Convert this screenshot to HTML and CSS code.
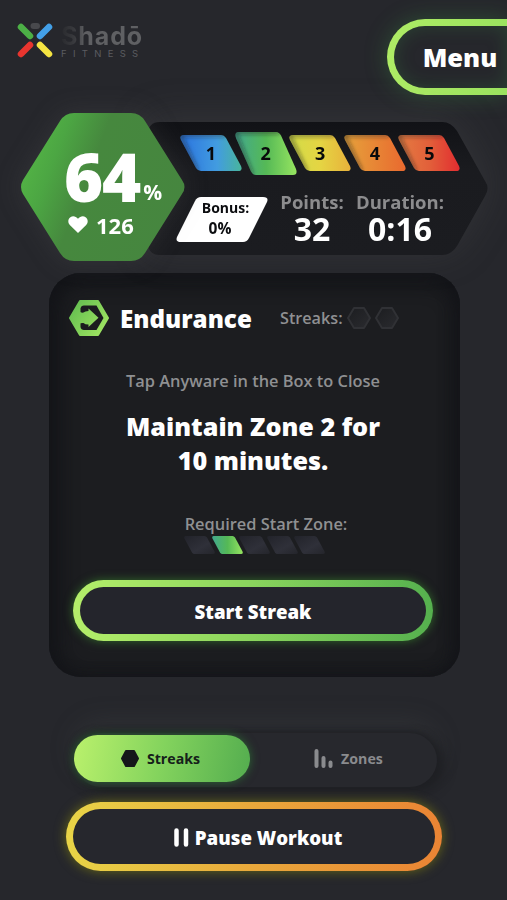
FILE: index.html
```
<!DOCTYPE html>
<html lang="en">
<head>
    <meta charset="UTF-8">
    <meta name="viewport" content="width=device-width, initial-scale=1.0">
    <title>Shadō Fitness</title>
    <link rel="stylesheet" href="styles.css">
</head>
<body>
    <!-- Shared shapes and gradients -->
    <svg class="defs" width="0" height="0">
        <defs>
            <path id="chip" d="M4 0H41Q44 0 46 3L61 31Q63 36 58 36H21Q18 36 16 33L1 5Q-1 0 4 0Z"/>
            <path id="hex" d="M7 1H17L23 11L17 21H7L1 11Z"/>
            <clipPath id="chipClip"><use href="#chip"/></clipPath>
            <filter id="soft" x="-20%" y="-20%" width="140%" height="140%"><feGaussianBlur stdDeviation="2"/></filter>
            <linearGradient id="blue"><stop offset=".1" stop-color="#2f7be0"/><stop offset=".6" stop-color="#429ce0"/><stop offset="1" stop-color="#49b59c"/></linearGradient>
            <linearGradient id="green"><stop offset="0" stop-color="#42a88e"/><stop offset=".5" stop-color="#55b956"/><stop offset="1" stop-color="#96e460"/></linearGradient>
            <linearGradient id="yellow"><stop offset="0" stop-color="#d2dc48"/><stop offset=".5" stop-color="#e5d543"/><stop offset="1" stop-color="#e8b13b"/></linearGradient>
            <linearGradient id="orange"><stop offset="0" stop-color="#e6a23b"/><stop offset="1" stop-color="#e9692f"/></linearGradient>
            <linearGradient id="red"><stop offset="0" stop-color="#e57c42"/><stop offset=".5" stop-color="#e2603a"/><stop offset="1" stop-color="#e22d30"/></linearGradient>
            <linearGradient id="off" x2="1" y2="1"><stop offset="0" stop-color="#22232a"/><stop offset=".6" stop-color="#2f3039"/><stop offset="1" stop-color="#24252b"/></linearGradient>
            <linearGradient id="hexOff" x2="1" y2="1"><stop offset="0" stop-color="#1c1d20"/><stop offset="1" stop-color="#2a2b2f"/></linearGradient>
            <linearGradient id="lime" gradientUnits="userSpaceOnUse" x1="0" y1="0" x2="40" y2="30"><stop offset="0" stop-color="#5cb94e"/><stop offset="1" stop-color="#a3e763"/></linearGradient>
            <linearGradient id="heart" x1="0" y1=".25" x2="1" y2=".6"><stop offset="0" stop-color="#55b746"/><stop offset=".2" stop-color="#4ca643"/><stop offset=".42" stop-color="#46883e"/><stop offset="1" stop-color="#46863f"/></linearGradient>
            <linearGradient id="panel" x2="0" y2="1"><stop offset="0" stop-color="#111216"/><stop offset=".35" stop-color="#1a1b1f"/><stop offset="1" stop-color="#1b1c20"/></linearGradient>
        </defs>
    </svg>

    <header class="header">
        <div class="logo">
            <svg width="36" height="38" viewBox="0 0 36 38" stroke-width="6.5" stroke-linecap="round">
                <rect x="13.500" y="2" width="9.500" height="6" rx="3" fill="#48494d"/>
                <path d="M4 6L13 15" stroke="#4caf46"/>
                <path d="M32 6L23 15" stroke="#43a0e8"/>
                <path d="M13 24L4 33" stroke="#e8352f"/>
                <path d="M23 24L32 33" stroke="#f5e442"/>
            </svg>
            <div class="logo-text">
                <div class="logo-name">Shadō</div>
                <div class="logo-sub">FITNESS</div>
            </div>
        </div>
        <button class="ring menu" type="button">Menu</button>
    </header>

    <section class="stats">
        <div class="heart-rate">
            <svg class="shape" width="165" height="148" viewBox="0 0 165 148">
                <path fill="url(#heart)" d="M3 67L40 8Q45 0 54 0H111Q120 0 125 8L162 67Q167 74 162 81L125 140Q120 148 111 148H54Q45 148 40 140L3 81Q-1 74 3 67Z"/>
            </svg>
            <div class="percent">64<span>%</span></div>
            <div class="bpm">
                <svg width="20" height="18" viewBox="0 0 20 18"><path fill="#fff" d="M10 17L1.8 9C-.5 6.500 0 2.800 2.400 1.200C4.900-.5 8 .3 10 2.800C12 .3 15.100-.5 17.600 1.200C20 2.800 20.500 6.500 18.200 9Z"/></svg>
                126
            </div>
        </div>
        <div class="panel">
            <svg class="shape" width="340" height="133" viewBox="0 0 340 133">
                <path fill="url(#panel)" d="M12 0H294Q303 0 309 9L337 59Q342 66 337 74L309 124Q303 133 294 133H12Q0 133 0 120V13Q0 0 12 0Z"/>
            </svg>
            <div class="zones">
                <div class="zone"><svg class="shape" viewBox="0 0 62 36"><use href="#chip" fill="url(#blue)"/><g clip-path="url(#chipClip)"><path class="shade" d="M17 36L0 0H45"/></g></svg><span>1</span></div>
                <div class="zone active"><svg class="shape" viewBox="0 0 62 36" preserveAspectRatio="none"><use href="#chip" fill="url(#green)"/><g clip-path="url(#chipClip)"><path class="shade" d="M17 36L0 0H45"/></g></svg><span>2</span></div>
                <div class="zone"><svg class="shape" viewBox="0 0 62 36"><use href="#chip" fill="url(#yellow)"/><g clip-path="url(#chipClip)"><path class="shade" d="M17 36L0 0H45"/></g></svg><span>3</span></div>
                <div class="zone"><svg class="shape" viewBox="0 0 62 36"><use href="#chip" fill="url(#orange)"/><g clip-path="url(#chipClip)"><path class="shade" d="M17 36L0 0H45"/></g></svg><span>4</span></div>
                <div class="zone"><svg class="shape" viewBox="0 0 62 36"><use href="#chip" fill="url(#red)"/><g clip-path="url(#chipClip)"><path class="shade" d="M17 36L0 0H45"/></g></svg><span>5</span></div>
            </div>
            <div class="totals">
                <div class="bonus">
                    <svg class="shape" width="92" height="45" viewBox="0 0 92 45"><path fill="#fff" d="M25 0H87Q93 0 91 5L73 41Q71 45 67 45H5Q-1 45 1 40L19 4Q21 0 25 0Z"/></svg>
                    <div class="bonus-label">Bonus:</div>
                    <div class="bonus-value">0%</div>
                </div>
                <div class="total points">
                    <div class="total-label">Points:</div>
                    <div class="total-value">32</div>
                </div>
                <div class="total duration">
                    <div class="total-label">Duration:</div>
                    <div class="total-value">0:16</div>
                </div>
            </div>
        </div>
    </section>

    <main class="card">
        <div class="card-header">
            <svg width="40" height="36" viewBox="0 0 40 36">
                <path fill="url(#lime)" stroke="url(#lime)" stroke-width="2" stroke-linejoin="round" d="M11 1H29L39 18L29 35H11L1 18Z"/>
                <path fill="#1b1c1f" d="M15 5.500H27.500L34.500 18L27.500 30H15Q12 30 11.500 27V8.500Q12 5.500 15 5.500Z"/>
                <path fill="url(#lime)" d="M10 11.500Q12 13 14.500 12.500Q16 11 19.500 11V8.500L29.500 17.800L19.500 27V24.500Q16 24.500 14.500 23Q12 22.500 10 24Z"/>
            </svg>
            <h1>Endurance</h1>
            <span class="streak-label">Streaks:</span>
            <svg class="streak-dot" width="24" height="22"><use href="#hex"/></svg>
            <svg class="streak-dot" width="24" height="22"><use href="#hex"/></svg>
        </div>
        <p class="hint">Tap Anyware in the Box to Close</p>
        <h2>Maintain Zone 2 for<br>10 minutes.</h2>
        <p class="required">Required Start Zone:</p>
        <div class="mini-zones">
            <svg width="31" height="18" viewBox="0 0 62 36"><use href="#chip" fill="url(#off)"/></svg>
            <svg width="31" height="18" viewBox="0 0 62 36"><use href="#chip" fill="url(#green)"/></svg>
            <svg width="31" height="18" viewBox="0 0 62 36"><use href="#chip" fill="url(#off)"/></svg>
            <svg width="31" height="18" viewBox="0 0 62 36"><use href="#chip" fill="url(#off)"/></svg>
            <svg width="31" height="18" viewBox="0 0 62 36"><use href="#chip" fill="url(#off)"/></svg>
        </div>
        <button class="ring start" type="button">Start Streak</button>
    </main>

    <nav class="tabs">
        <button class="tab tab-active" type="button">
            <svg width="18" height="17" viewBox="0 0 18 17"><path fill="#15171a" stroke="#15171a" stroke-width="2" stroke-linejoin="round" d="M5 1H13L17 8.500L13 16H5L1 8.500Z"/></svg>
            Streaks
        </button>
        <button class="tab" type="button">
            <svg width="19" height="19" viewBox="0 0 19 19" stroke="#8a8b8e" stroke-width="4" stroke-linecap="round"><path d="M2.500 2V17M9.500 9V17M16.500 13.500V17"/></svg>
            Zones
        </button>
    </nav>

    <button class="ring pause" type="button">
        <svg width="15" height="19" viewBox="0 0 15 19" stroke="#fff" stroke-width="4.500" stroke-linecap="round"><path d="M2.500 2.500V16.500M12 2.500V16.500"/></svg>
        Pause Workout
    </button>
</body>
</html>
```

FILE: styles.css
```
* {
    box-sizing: border-box;
}

body {
    font-family: "Open Sans", "Noto Sans", sans-serif;
    background-color: #26272c;
    color: #fff;
    margin: 0;
    height: 900px;
    overflow: hidden;
}

h1, h2, p {
    margin: 0;
}

button {
    font-family: inherit;
    color: #fff;
    border: none;
    padding: 0;
    cursor: pointer;
}

svg {
    display: block;
    flex: none;
}

.defs {
    position: absolute;
}

.shape {
    position: absolute;
    top: 0;
    left: 0;
    width: 100%;
    height: 100%;
    z-index: -1;
}

/* Header */
.header {
    display: flex;
    justify-content: space-between;
    height: 113px;
    padding: 19px 0 0 17px;
}

.logo {
    display: flex;
    gap: 8px;
    padding-top: 2px;
}

.logo-text {
    padding-top: 2px;
    font-family: Inter, sans-serif;
    color: #5b5c60;
}

.logo-name {
    font-size: 25px;
    font-weight: 700;
    line-height: 26px;
    letter-spacing: 0.9px;
    background: linear-gradient(90deg, #292a2e 0, #3a3b3f 14px, #5f6063 24px);
    -webkit-background-clip: text;
    background-clip: text;
    color: transparent;
}

.logo-sub {
    font-size: 9.5px;
    line-height: 9px;
    letter-spacing: 6.3px;
}

.ring {
    display: flex;
    align-items: center;
    justify-content: center;
    border: 7px solid transparent;
    border-radius: 38px;
    font-weight: 800;
}

.menu {
    width: 120px;
    height: 76px;
    padding-left: 19px;
    border-right: none;
    border-radius: 38px 0 0 38px;
    font-size: 25.500px;
    background: linear-gradient(#26272c, #26272c) padding-box, linear-gradient(90deg, #aeec65, #9be35f) border-box;
    box-shadow: 0 0 22px rgba(60, 150, 70, 0.35), inset 0 0 18px rgba(60, 150, 70, 0.25);
}

/* Stats */
.stats {
    display: flex;
    align-items: flex-start;
    height: 160px;
    padding-left: 20px;
}

.heart-rate {
    position: relative;
    z-index: 1;
    width: 165px;
    height: 148px;
    padding-top: 30px;
    filter: drop-shadow(0 0 12px rgba(90, 90, 90, 0.25));
}

.percent {
    display: flex;
    align-items: baseline;
    height: 67px;
    padding-left: 44px;
    font-size: 67px;
    font-weight: 800;
    line-height: 66px;
    letter-spacing: -1.2px;
}

.percent span {
    position: relative;
    top: -2px;
    margin-left: 3px;
    font-size: 21px;
    font-weight: 700;
    line-height: 20px;
    letter-spacing: 0;
}

.bpm {
    display: flex;
    align-items: center;
    gap: 8px;
    padding-left: 48px;
    font-size: 22px;
    font-weight: 700;
    line-height: 30px;
}

.panel {
    position: relative;
    z-index: 0;
    width: 340px;
    height: 133px;
    margin: 9px 0 0 -37px;
    padding: 9px 0 0 32px;
    filter: drop-shadow(0 -4px 18px rgba(90, 90, 90, 0.25));
}

.zones {
    display: flex;
    align-items: center;
    height: 44px;
}

.zone {
    position: relative;
    z-index: 0;
    display: flex;
    align-items: center;
    justify-content: center;
    width: 62px;
    height: 36px;
    margin-right: -7.4px;
    color: #08090b;
    font-size: 18px;
    font-weight: 700;
}

.zone.active {
    height: 43px;
}

.shade {
    fill: none;
    stroke: #1b1c20;
    stroke-width: 3;
    stroke-opacity: 0.6;
    filter: url(#soft);
}

.totals {
    display: flex;
    margin: 14px 0 0 -4px;
}

.bonus {
    position: relative;
    z-index: 0;
    width: 92px;
    height: 45px;
    margin-top: 8px;
    padding-top: 1px;
    color: #0c0d10;
    font-weight: 700;
    text-align: center;
}

.bonus-label {
    padding-left: 7px;
    font-size: 14px;
    line-height: 20px;
}

.bonus-value {
    padding-right: 4px;
    font-size: 15.500px;
    line-height: 20px;
}

.total {
    font-weight: 700;
    text-align: center;
}

.points {
    width: 64px;
    margin-left: 12px;
}

.duration {
    width: 90px;
    margin-left: 11px;
}

.total-label {
    color: #8c8c8e;
    font-size: 18.500px;
    line-height: 26px;
    white-space: nowrap;
}

.total-value {
    font-size: 32px;
    line-height: 28px;
}

/* Streak card */
.card {
    display: flex;
    flex-direction: column;
    align-items: center;
    width: 411px;
    height: 404px;
    margin-left: 49px;
    padding: 25px 27px 0 24px;
    border-radius: 32px;
    background-color: #1c1d20;
    box-shadow: inset 0 8px 20px #131418, inset 8px 0 20px #15161a, inset -6px 0 14px #17181c;
}

.card-header {
    display: flex;
    align-items: center;
    align-self: stretch;
    height: 40px;
    margin-left: -4px;
}

h1 {
    width: 131px;
    margin: 0 29px 0 11px;
    font-size: 24.200px;
    font-weight: 800;
    white-space: nowrap;
}

.streak-label {
    width: 67px;
    color: #8f9092;
    font-size: 16.200px;
    font-weight: 600;
}

.streak-dot {
    margin-right: 4px;
    fill: url(#hexOff);
    stroke: #303135;
    stroke-width: 2;
    stroke-linejoin: round;
}

.hint,
.required {
    color: #8f9092;
    font-size: 16.400px;
    font-weight: 600;
    line-height: 24px;
}

.hint {
    margin: 31px 0 16px;
}

h2 {
    font-size: 25.200px;
    font-weight: 800;
    line-height: 34px;
    text-align: center;
}

.required {
    margin-top: 35px;
    padding-left: 26px;
}

.mini-zones {
    display: flex;
    margin-bottom: 26px;
}

.mini-zones svg {
    margin-right: -3.5px;
}

.start {
    width: 360px;
    height: 61px;
    padding-top: 2px;
    font-size: 18.700px;
    background: linear-gradient(#24252c, #24252c) padding-box, linear-gradient(90deg, #b4ee6a, #8ad45d 50%, #55b04e) border-box;
    box-shadow: 0 0 10px rgba(70, 180, 50, 0.5);
}

/* Tabs */
.tabs {
    display: flex;
    width: 363px;
    height: 54px;
    margin: 56px 0 0 74px;
    padding: 2px 0 5px;
    border-radius: 27px;
    background-color: #27282d;
    box-shadow: 7px 5px 12px #1e1f23, 0 -3px 6px #222327, 0 -12px 24px rgba(70, 72, 74, 0.3);
}

.tab {
    display: flex;
    flex: 1;
    align-items: center;
    justify-content: center;
    gap: 8px;
    padding-left: 10px;
    border-radius: 24px;
    background: none;
    color: #8a8b8e;
    font-size: 14.200px;
    font-weight: 700;
}

.tab-active {
    flex: 0 0 176px;
    padding: 0 3px 0 0;
    background: linear-gradient(100deg, #baf16c, #83d35d 50%, #54ad4f);
    color: #15201a;
    box-shadow: 0 0 10px rgba(50, 170, 60, 0.5);
}

.pause {
    gap: 6px;
    width: 376px;
    height: 69px;
    margin: 15px 0 0 66px;
    padding: 1px 0 0 8px;
    font-size: 18.700px;
    background: linear-gradient(#26272d, #26272d) padding-box, linear-gradient(90deg, #e8d447, #e9a83b 50%, #ea8434) border-box;
    box-shadow: 0 0 12px rgba(150, 150, 10, 0.6);
}
```
